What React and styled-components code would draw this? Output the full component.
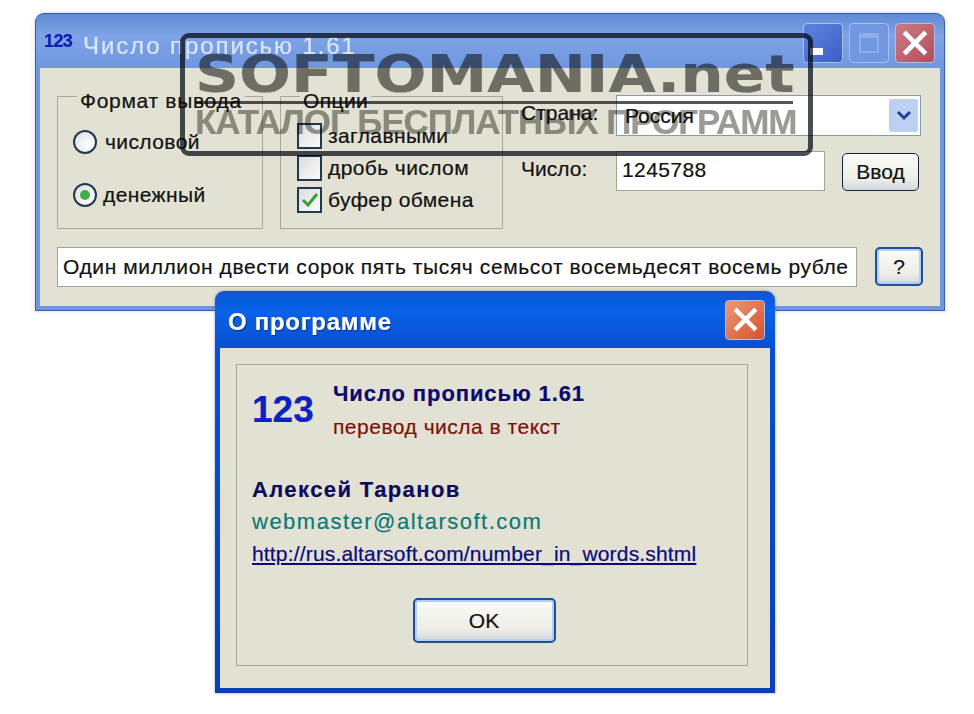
import React from 'react';
import styled, { createGlobalStyle } from 'styled-components';

const GlobalStyle = createGlobalStyle`
  html, body { margin: 0; padding: 0; background: #fff; }
  body { font-family: "Liberation Sans", Arial, sans-serif; color: #111; -webkit-text-stroke: 0.2px; }
`;

const Desktop = styled.div`
  position: relative;
  width: 974px;
  height: 714px;
  overflow: hidden;
  background: #fff;
  & > * { filter: blur(0.45px); }
`;

const MainWindow = styled.div`
  position: absolute;
  left: 35px;
  top: 13px;
  width: 910px;
  height: 298px;
  box-sizing: border-box;
  display: flex;
  flex-direction: column;
  border: 1px solid #3d5ea8;
  border-top-color: #2f5aa8;
  border-radius: 9px 9px 0 0;
  background: linear-gradient(#5f8ad6 0, #7ea3e6 22px, #6f97e0 54px);
  box-shadow: 0 0 4px rgba(120, 130, 170, 0.35);
`;

const TitleBar = styled.div`
  height: 54px;
  flex: none;
  display: flex;
  align-items: center;
  padding: 0 9px 0 8px;
`;

const AppMark = styled.span`
  font-size: 18px;
  font-weight: 700;
  color: #0a1fb0;
  width: 39px;
  letter-spacing: -0.6px;
  margin-top: 1px;
`;

const MainTitle = styled.span`
  font-size: 24px;
  letter-spacing: 1.9px;
  color: #dbe6f8;
  flex: 1;
  margin-top: 9px;
`;

const CaptionButtons = styled.div`
  display: flex;
  gap: 6px;
  margin-top: 3px;
`;

const CaptionButton = styled.div`
  width: 40px;
  height: 40px;
  box-sizing: border-box;
  display: flex;
  align-items: center;
  justify-content: center;
  border: 1px solid #a9c0ee;
  border-radius: 4px;
  background: ${p => p.$bg};
`;

const MainBody = styled.div`
  flex: 1;
  margin: 0 4px 4px;
  padding: 27px 15px 0 17px;
  background: #e3e1d3;
  display: flex;
  flex-direction: column;
`;

const TopRow = styled.div`
  display: flex;
  align-items: flex-start;
`;

const GroupBox = styled.div`
  position: relative;
  box-sizing: border-box;
  flex: none;
  width: ${p => p.$w}px;
  height: 133px;
  margin: 1px ${p => p.$mr}px 0 0;
  border: 1px solid #a9a898;
  display: flex;
  flex-direction: column;
  padding-top: ${p => p.$pt}px;
  padding-left: ${p => p.$pl}px;
`;

const GroupLabel = styled.span`
  position: absolute;
  top: -7px;
  left: ${p => p.$left}px;
  padding: 0 3px;
  font-size: 21px;
  line-height: 22px;
  letter-spacing: ${p => p.$ls}px;
  background: #e3e1d3;
  white-space: nowrap;
`;

const OptionRow = styled.div`
  display: flex;
  align-items: center;
  height: ${p => p.$h}px;
  font-size: 21px;
  letter-spacing: 0.4px;
  gap: ${p => p.$gap}px;
`;

const Radio = styled.span`
  width: 24px;
  height: 24px;
  box-sizing: border-box;
  flex: none;
  border: 2px solid #1d3b4c;
  border-radius: 50%;
  display: flex;
  align-items: center;
  justify-content: center;
  background: radial-gradient(circle at 65% 65%, #fff, #dcdce0);
`;

const RadioDot = styled.span`
  width: 10px;
  height: 10px;
  border-radius: 50%;
  background: #3fae48;
`;

const Checkbox = styled.span`
  width: 25px;
  height: 26px;
  box-sizing: border-box;
  flex: none;
  border: 2px solid #1d3b4c;
  background: linear-gradient(135deg, #dcdce0, #fbfbfb);
  display: flex;
  align-items: center;
  justify-content: center;
`;

const RightColumn = styled.div`
  display: flex;
  flex: none;
  flex-direction: column;
  gap: 15px;
`;

const FieldRow = styled.div`
  display: flex;
  align-items: flex-start;
  font-size: 21px;
`;

const FieldLabel = styled.span`
  width: 95px;
  flex: none;
  line-height: 36px;
`;

const Select = styled.div`
  box-sizing: border-box;
  width: 305px;
  height: 41px;
  border: 1px solid #7f9db9;
  background: #fff;
  display: flex;
  align-items: center;
  justify-content: space-between;
  padding: 0 2px 0 8px;
  line-height: 36px;
`;

const SelectArrow = styled.span`
  width: 29px;
  height: 33px;
  border-radius: 2px;
  background: #bcd0f1;
  display: flex;
  align-items: center;
  justify-content: center;
`;

const Input = styled.div`
  box-sizing: border-box;
  width: 209px;
  height: 40px;
  border: 1px solid #a4a494;
  background: #fff;
  padding-left: 5px;
  line-height: 36px;
  letter-spacing: 0.4px;
`;

const XpButton = styled.div`
  box-sizing: border-box;
  width: ${p => p.$w}px;
  height: ${p => p.$h}px;
  margin: ${p => p.$margin || 0};
  flex: none;
  display: flex;
  align-items: center;
  justify-content: center;
  border: ${p => p.$focus ? '2px solid #1c4f9c' : '1.5px solid #10263a'};
  border-radius: 5px;
  background: linear-gradient(#fbfbf8, #eeeee6 70%, #d3d6dc);
  box-shadow: ${p => p.$focus ? 'inset 0 0 0 2px #b5cdf0' : 'none'};
  font-size: 21px;
`;

const ResultRow = styled.div`
  display: flex;
  align-items: flex-start;
  gap: 18px;
  margin-top: 18px;
  font-size: 21px;
`;

const ResultField = styled.div`
  box-sizing: border-box;
  flex: none;
  width: 800px;
  height: 40px;
  border: 1px solid #a4a494;
  background: #fff;
  padding-left: 5px;
  line-height: 37px;
  white-space: nowrap;
  overflow: hidden;
  letter-spacing: 0.6px;
`;

/* multiply keeps the dark form text readable through the stamp, as in the picture */
const Watermark = styled.div`
  position: absolute;
  left: 180px;
  top: 33px;
  width: 633px;
  height: 123px;
  box-sizing: border-box;
  border: 5px solid #4a4e56;
  border-radius: 9px;
  mix-blend-mode: multiply;
  padding: 14px 0 0 10px;
  font-weight: 700;
  white-space: nowrap;
`;

const MarkTitle = styled.div`
  width: 598px;
  height: 52px;
  box-sizing: border-box;
  border-bottom: 3px solid #55555a;
  color: #7c7c78;
`;

const MarkTitleText = styled.span`
  display: inline-block;
  font-family: "DejaVu Sans", sans-serif;
  font-size: 52px;
  line-height: 45px;
  transform: scaleX(1.176);
  transform-origin: left center;
`;

const MarkSub = styled.div`
  font-size: 35px;
  line-height: 28px;
  margin-top: 4px;
  letter-spacing: -1.1px;
  color: #9a9a96;
`;

const Dialog = styled.div`
  position: absolute;
  left: 215px;
  top: 291px;
  width: 560px;
  height: 402px;
  box-sizing: border-box;
  display: flex;
  flex-direction: column;
  border-radius: 9px 9px 0 0;
  background: linear-gradient(#0a57d6 0, #0a62e8 20px, #0850d0 57px, #0a3fb8 100%);
  box-shadow: 0 0 3px rgba(40, 60, 120, 0.5);
  padding: 0 5px 5px;
`;

const DialogTitleBar = styled.div`
  height: 57px;
  flex: none;
  display: flex;
  align-items: center;
  justify-content: space-between;
  padding: 0 5px 0 8px;
`;

const DialogTitle = styled.span`
  font-size: 24px;
  font-weight: 700;
  color: #fff;
  letter-spacing: 0.7px;
  margin-top: 4px;
  text-shadow: 1px 1px 1px #0b2f80;
`;

const DialogBody = styled.div`
  flex: 1;
  box-sizing: border-box;
  background: #e3e1d3;
  padding: 16px 22px 22px 16px;
  display: flex;
`;

const InfoPanel = styled.div`
  flex: 1;
  box-sizing: border-box;
  border: 1px solid #a5a596;
  padding: 16px 0 0 15px;
  display: flex;
  flex-direction: column;
`;

const ProductRow = styled.div`
  display: flex;
  align-items: flex-start;
  height: 77px;
`;

const BigMark = styled.span`
  width: 81px;
  flex: none;
  margin-top: 8px;
  font-size: 37px;
  font-weight: 700;
  line-height: 42px;
  color: #0a22c4;
`;

const ProductName = styled.div`
  font-size: 22px;
  font-weight: 700;
  line-height: 26px;
  color: #0a0a6e;
  letter-spacing: 0.9px;
`;

const ProductNote = styled.div`
  font-size: 21px;
  line-height: 26px;
  margin-top: 7px;
  color: #7a1208;
  letter-spacing: 0.5px;
`;

const Author = styled.div`
  font-size: 22px;
  font-weight: 700;
  line-height: 28px;
  margin-top: 18px;
  color: #0a0a5e;
  letter-spacing: 1.4px;
`;

const Email = styled.div`
  font-size: 22px;
  line-height: 28px;
  margin-top: 4px;
  color: #0a7a78;
  letter-spacing: 1.5px;
`;

const SiteLink = styled.div`
  font-size: 21px;
  line-height: 28px;
  margin-top: 4px;
  color: #0a0a80;
  text-decoration: underline;
  letter-spacing: 0.17px;
`;

const ButtonRow = styled.div`
  display: flex;
  justify-content: center;
  margin: 30px 31px 0 0;
`;

const CloseIcon = ({ size }) => (
  <svg width={size} height={size} viewBox="0 0 20 20">
    <path d="M3 3 L17 17 M17 3 L3 17" stroke="#fff" strokeWidth="3.6" strokeLinecap="square" />
  </svg>
);

const CheckIcon = () => (
  <svg width="18" height="16" viewBox="0 0 18 16">
    <path d="M2 8 L7 13 L16 2" fill="none" stroke="#3a9c3a" strokeWidth="3" />
  </svg>
);

const ChevronIcon = () => (
  <svg width="16" height="11" viewBox="0 0 16 11">
    <path d="M2 2 L8 8 L14 2" fill="none" stroke="#1f3f96" strokeWidth="3" />
  </svg>
);

const MinimizeGlyph = styled.span`
  width: 13px;
  height: 7px;
  background: #fff;
  margin: 18px 14px 0 0;
`;

const MaximizeGlyph = styled.span`
  width: 20px;
  height: 20px;
  box-sizing: border-box;
  border: 2px solid #8fadea;
  border-top-width: 5px;
`;

export default function App() {
  return (
    <Desktop>
      <GlobalStyle />
      <MainWindow>
        <TitleBar>
          <AppMark>123</AppMark>
          <MainTitle>Число прописью 1.61</MainTitle>
          <CaptionButtons>
            <CaptionButton $bg="linear-gradient(135deg, #5f83dc, #3a5fc8)"><MinimizeGlyph /></CaptionButton>
            <CaptionButton $bg="#7097e0"><MaximizeGlyph /></CaptionButton>
            <CaptionButton $bg="linear-gradient(135deg, #c97c84, #b44d5c)"><CloseIcon size={26} /></CaptionButton>
          </CaptionButtons>
        </TitleBar>
        <MainBody>
          <TopRow>
            <GroupBox $w={206} $mr={17} $pt={25} $pl={15}>
              <GroupLabel $left={19} $ls={0.7}>Формат вывода</GroupLabel>
              <OptionRow $h={40} $gap={8}><Radio />числовой</OptionRow>
              <OptionRow $h={68} $gap={6}><Radio><RadioDot /></Radio>денежный</OptionRow>
            </GroupBox>
            <GroupBox $w={223} $mr={18} $pt={22} $pl={16}>
              <GroupLabel $left={19} $ls={0.4}>Опции</GroupLabel>
              <OptionRow $h={33} $gap={6}><Checkbox />заглавными</OptionRow>
              <OptionRow $h={32} $gap={6}><Checkbox />дробь числом</OptionRow>
              <OptionRow $h={32} $gap={6}><Checkbox><CheckIcon /></Checkbox>буфер обмена</OptionRow>
            </GroupBox>
            <RightColumn>
              <FieldRow>
                <FieldLabel>Страна:</FieldLabel>
                <Select>Россия<SelectArrow><ChevronIcon /></SelectArrow></Select>
              </FieldRow>
              <FieldRow>
                <FieldLabel>Число:</FieldLabel>
                <Input>1245788</Input>
                <XpButton $w={77} $h={38} $margin="2px 0 0 17px">Ввод</XpButton>
              </FieldRow>
            </RightColumn>
          </TopRow>
          <ResultRow>
            <ResultField>Один миллион двести сорок пять тысяч семьсот восемьдесят восемь рубле</ResultField>
            <XpButton $w={48} $h={39} $focus>?</XpButton>
          </ResultRow>
        </MainBody>
      </MainWindow>
      <Watermark>
        <MarkTitle><MarkTitleText>SOFTOMANIA.net</MarkTitleText></MarkTitle>
        <MarkSub>КАТАЛОГ БЕСПЛАТНЫХ ПРОГРАММ</MarkSub>
      </Watermark>
      <Dialog>
        <DialogTitleBar>
          <DialogTitle>О программе</DialogTitle>
          <CaptionButton $bg="linear-gradient(135deg, #ea9a78, #d9502c)"><CloseIcon size={25} /></CaptionButton>
        </DialogTitleBar>
        <DialogBody>
          <InfoPanel>
            <ProductRow>
              <BigMark>123</BigMark>
              <div>
                <ProductName>Число прописью 1.61</ProductName>
                <ProductNote>перевод числа в текст</ProductNote>
              </div>
            </ProductRow>
            <Author>Алексей Таранов</Author>
            <Email>webmaster@altarsoft.com</Email>
            <SiteLink>http://rus.altarsoft.com/number_in_words.shtml</SiteLink>
            <ButtonRow>
              <XpButton $w={143} $h={45} $focus>OK</XpButton>
            </ButtonRow>
          </InfoPanel>
        </DialogBody>
      </Dialog>
    </Desktop>
  );
}
